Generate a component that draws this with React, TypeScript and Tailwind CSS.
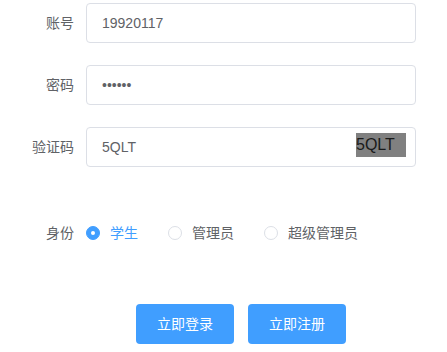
import React, { useState } from 'react';

const roles = ['学生', '管理员', '超级管理员'];

const FormItem: React.FC<{ label: string; children: React.ReactNode; className?: string }> = ({
  label,
  children,
  className = '',
}) => (
  <div className={`flex ${className}`}>
    <label className="w-[86px] shrink-0 pr-3 text-right text-sm leading-10 text-[#606266]">{label}</label>
    <div className="relative w-[330px] leading-10">{children}</div>
  </div>
);

const inputClass =
  'h-10 w-full rounded border border-[#dcdfe6] bg-white px-[15px] text-sm text-[#606266] outline-none focus:border-[#409eff]';

const App: React.FC = () => {
  const [role, setRole] = useState('学生');

  return (
    <div
      className="min-h-[352px] w-[447px] bg-white pt-[3px]"
      style={{ fontFamily: '"Liberation Sans", "Noto Sans CJK SC", sans-serif' }}
    >
      <FormItem label="账号" className="mb-[22px]">
        <input className={inputClass} defaultValue="19920117" />
      </FormItem>

      <FormItem label="密码" className="mb-[22px]">
        <input className={inputClass} type="password" defaultValue="123456" />
      </FormItem>

      <FormItem label="验证码">
        <input className={inputClass} defaultValue="5QLT" />
        {/* captcha picture */}
        <div className="absolute right-[10px] top-[6px] h-6 w-[50px] bg-[#808080] text-base leading-6 text-[#1a1a1a]">
          5QLT
        </div>
      </FormItem>

      <FormItem label="身份" className="mt-[46px]">
        <div className="flex h-10 items-center">
          {roles.map((r) => {
            const checked = role === r;
            return (
              <button
                key={r}
                type="button"
                onClick={() => setRole(r)}
                className="mr-[30px] flex items-center text-sm"
              >
                <span
                  className={`flex h-[14px] w-[14px] items-center justify-center rounded-full border ${
                    checked ? 'border-[#409eff] bg-[#409eff]' : 'border-[#dcdfe6] bg-white'
                  }`}
                >
                  {checked && <span className="h-1 w-1 rounded-full bg-white" />}
                </span>
                <span className={`pl-[10px] ${checked ? 'text-[#409eff]' : 'text-[#606266]'}`}>{r}</span>
              </button>
            );
          })}
        </div>
      </FormItem>

      <div className="ml-[136px] mt-[51px] flex gap-[14px]">
        <button className="h-10 w-[98px] rounded bg-[#409eff] text-sm text-white">立即登录</button>
        <button className="h-10 w-[98px] rounded bg-[#409eff] text-sm text-white">立即注册</button>
      </div>
    </div>
  );
};

export default App;
